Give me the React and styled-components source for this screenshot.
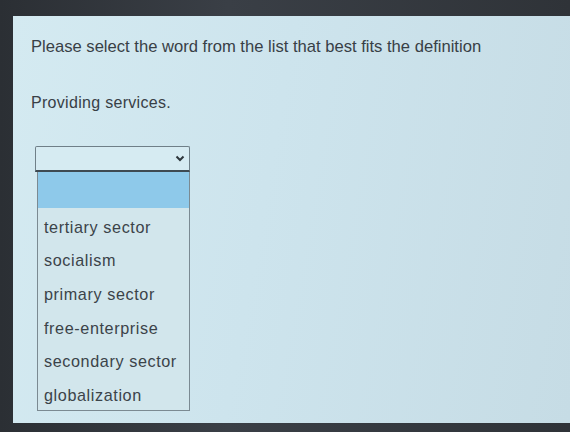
import React from "react";
import styled, { createGlobalStyle } from "styled-components";

const GlobalStyle = createGlobalStyle`
  html, body {
    margin: 0;
    padding: 0;
    background: #2d3136;
  }
  body {
    font-family: "Liberation Sans", Arial, sans-serif;
  }
`;

const Frame = styled.div`
  width: 570px;
  height: 432px;
  box-sizing: border-box;
  padding: 16px 0 9px 13px;
  background: linear-gradient(90deg, #2b2f34 0%, #3a3f46 40%, #2f3338 100%);
  display: flex;
  overflow: hidden;
`;

const Panel = styled.div`
  flex: 1;
  display: flex;
  flex-direction: column;
  padding: 22px 0 0 18px;
  background: linear-gradient(100deg, #d4eaf1 0%, #cde4ed 45%, #c6dce5 100%);
  color: #384046;
`;

const Prompt = styled.div`
  font-size: 16.6px;
  line-height: 18px;
  letter-spacing: 0px;
  white-space: nowrap;
`;

const Definition = styled.div`
  margin-top: 38px;
  font-size: 16px;
  line-height: 18px;
  letter-spacing: 0.3px;
`;

const Dropdown = styled.div`
  width: 155px;
  margin: 34px 0 0 4px;
  display: flex;
  flex-direction: column;
`;

const SelectBox = styled.div`
  height: 23px;
  display: flex;
  justify-content: flex-end;
  align-items: center;
  padding-right: 4px;
  border: 1px solid #6f7f88;
  border-bottom: 2px solid #3e4a52;
  border-radius: 2px 2px 0 0;
  background: #d6ebf2;
`;

const List = styled.div`
  margin-left: 2px;
  display: flex;
  flex-direction: column;
  border: 1px solid #7b8a92;
  border-top: none;
  background: #d2e6ec;
`;

const Option = styled.div`
  box-sizing: border-box;
  height: ${(p) => (p.$blank ? "36px" : "33.6px")};
  display: flex;
  align-items: center;
  padding: ${(p) => (p.$blank ? "0" : "5px 0 0 6px")};
  font-size: 16.2px;
  letter-spacing: 0.6px;
  white-space: nowrap;
  color: #3b4349;
  background: ${(p) => (p.$selected ? "#8ec9ea" : "transparent")};
`;

const options = [
  "tertiary sector",
  "socialism",
  "primary sector",
  "free-enterprise",
  "secondary sector",
  "globalization",
];

export default function App() {
  return (
    <>
      <GlobalStyle />
      <Frame>
        <Panel>
          <Prompt>Please select the word from the list that best fits the definition</Prompt>
          <Definition>Providing services.</Definition>
          <Dropdown>
            <SelectBox>
              <svg width="10" height="7" viewBox="0 0 10 7">
                <path d="M1.5 1.5 L5 5 L8.5 1.5" fill="none" stroke="#2e363c" strokeWidth="2" />
              </svg>
            </SelectBox>
            <List>
              <Option $blank $selected />
              {options.map((o) => (
                <Option key={o}>{o}</Option>
              ))}
            </List>
          </Dropdown>
        </Panel>
      </Frame>
    </>
  );
}
